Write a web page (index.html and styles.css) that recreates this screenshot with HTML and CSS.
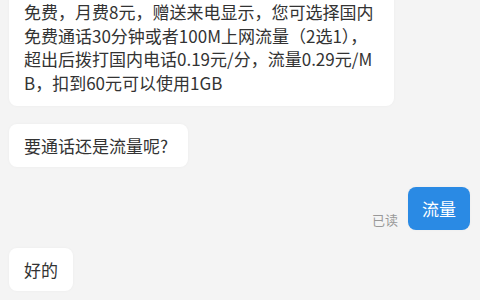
FILE: index.html
```html
<!DOCTYPE html>
<html lang="zh-CN">
<head>
    <meta charset="UTF-8">
    <meta name="viewport" content="width=device-width, initial-scale=1.0">
    <title>聊天</title>
    <link rel="stylesheet" href="styles.css">
</head>
<body>
    <div class="chat">
        <div class="msg left">
            <div class="bubble first">免费，月费8元，赠送来电显示，您可选择国内<br>免费通话30分钟或者100M上网流量（2选1），<br>超出后拨打国内电话0.19元/分，流量0.29元/M<br>B，扣到60元可以使用1GB</div>
        </div>
        <div class="msg left">
            <div class="bubble ask">要通话还是流量呢?</div>
        </div>
        <div class="msg right">
            <span class="read">已读</span>
            <div class="bubble mine">流量</div>
        </div>
        <div class="msg left">
            <div class="bubble">好的</div>
        </div>
    </div>
</body>
</html>
```

FILE: styles.css
```css
body, html {
    margin: 0;
    padding: 0;
    width: 100%;
    height: 100%;
    overflow: hidden;
    background-color: #f4f4f4;
    font-family: "Noto Sans CJK SC", "Liberation Sans", sans-serif;
    color: #333;
}

.chat {
    display: flex;
    flex-direction: column;
    gap: 18px;
    padding: 0 10px 0 9px;
}

.msg {
    display: flex;
    align-items: flex-end;
}

.msg.right {
    justify-content: flex-end;
    gap: 10px;
    margin-top: 2px;
}

.bubble {
    background: #fff;
    border-radius: 8px;
    padding: 10px 15px;
    font-size: 17px;
    line-height: 23px;
    box-shadow: 0 0 3px rgba(0, 0, 0, 0.04);
}

.bubble.first {
    margin-top: -12px;
    padding: 12px 21px 12px 15px;
    line-height: 23.5px;
}

.bubble.ask {
    padding-right: 20px;
}

.bubble.mine {
    background: #2a8ae4;
    color: #fff;
    padding: 10px 14px;
}

.read {
    font-size: 13px;
    color: #999;
    line-height: 18px;
    margin-bottom: 1px;
}
```
